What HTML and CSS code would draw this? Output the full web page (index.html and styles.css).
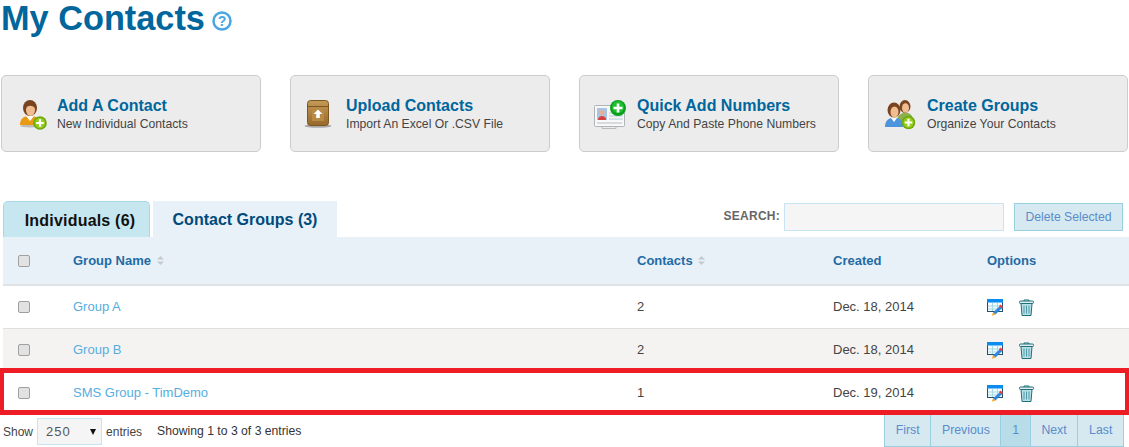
FILE: index.html
```html
<!DOCTYPE html>
<html>
<head>
  <meta charset="UTF-8">
  <title>My Contacts</title>
  <link rel="stylesheet" href="styles.css">
</head>
<body>
  <svg class="sprite" width="0" height="0">
    <defs>
      <linearGradient id="box-fill" x1="0" y1="0" x2="0" y2="1">
        <stop offset="0" stop-color="#c49a58"/>
        <stop offset="1" stop-color="#96682a"/>
      </linearGradient>
    </defs>
    <symbol id="plus-lime" viewBox="0 0 14 14">
      <circle cx="7" cy="7" r="6.8" fill="#6fa80a"/>
      <circle cx="7" cy="7" r="5.2" fill="#94cc1e"/>
      <path d="M7 3.2v7.6M3.2 7h7.6" stroke="#fff" stroke-width="2.2"/>
    </symbol>
    <symbol id="edit" viewBox="0 0 17 17">
      <rect x="0.5" y="0.5" width="15" height="12" fill="#f2fafd" stroke="#24506e"/>
      <rect x="0" y="0" width="16" height="3.5" fill="#0a8cf0"/>
      <path d="M1 7h14M1 10h14M5.5 4v8M10.5 4v8" stroke="#a8d8e4"/>
      <path d="M13.500 6.500l2 2-7 7-2.500-2z" fill="#2e86de"/>
      <path d="M13.500 5.500l2.500 2.500-1.500 1.500-2.500-2.500z" fill="#e8413c"/>
      <path d="M6 13l2.500 2.500-3.500 1.300z" fill="#f5a623"/>
    </symbol>
    <symbol id="trash" viewBox="0 0 15 17">
      <path d="M5 2V1h5v1" fill="none" stroke="#1f6e78"/>
      <rect x="0.500" y="2" width="14" height="2.500" rx="1" fill="#dff0f3" stroke="#1f6e78"/>
      <path d="M2 4.500h11l-1 12H3z" fill="#b8dfe6" stroke="#1f6e78"/>
      <path d="M5 6.500v8M7.500 6.500v8M10 6.500v8" stroke="#4f9aa6"/>
    </symbol>
    <symbol id="sort" viewBox="0 0 7 9">
      <path d="M3.500 0L7 3.500H0zM3.500 9L0 5.500h7z" fill="#c4cbd0"/>
    </symbol>
  </svg>

  <div class="title-row">
    <h1>My Contacts</h1>
    <svg class="help" width="20" height="20" viewBox="0 0 20 20">
      <circle cx="10" cy="10" r="8.500" fill="#fff" stroke="#4aa6e2" stroke-width="2.500"/>
      <text x="10" y="14.500" text-anchor="middle" class="help-mark">?</text>
    </svg>
  </div>

  <div class="tiles">
    <a class="tile">
      <svg class="tile-icon person" width="28" height="30" viewBox="0 0 28 30">
        <ellipse cx="11" cy="26" rx="10" ry="1.500" fill="#bbb"/>
        <path d="M1 25c0-6 3-8 7-9h6c4 1 7 3 7 9z" fill="#ea9a12"/>
        <path d="M7 16l4 5 4-5z" fill="#fff"/>
        <ellipse cx="11" cy="8" rx="7" ry="8" fill="#7a4320"/>
        <ellipse cx="11.500" cy="10" rx="4.500" ry="6" fill="#efbd90"/>
        <path d="M7 8c2-3 6-3 9 0l-1-4H8z" fill="#7a4320"/>
        <use href="#plus-lime" x="14" y="16" width="14" height="14"/>
      </svg>
      <span class="tile-text">
        <strong>Add A Contact</strong>
        <small>New Individual Contacts</small>
      </span>
    </a>
    <a class="tile">
      <svg class="tile-icon box" width="28" height="29" viewBox="0 0 28 29">
        <ellipse cx="14" cy="26" rx="13.500" ry="1.800" fill="#a8a8a8"/>
        <rect x="3.500" y="0.500" width="21" height="25" rx="3" fill="url(#box-fill)" stroke="#7d5620"/>
        <path d="M3.500 6.500h21" stroke="#7d5620"/>
        <rect x="8" y="8" width="12" height="13" fill="#b98a45"/>
        <path d="M14 9.500l4.500 4.500h-2.700v4h-3.600v-4H9.500z" fill="#fff"/>
      </svg>
      <span class="tile-text">
        <strong>Upload Contacts</strong>
        <small>Import An Excel Or .CSV File</small>
      </span>
    </a>
    <a class="tile">
      <svg class="tile-icon card" width="33" height="30" viewBox="0 0 33 30">
        <rect x="0.500" y="5.500" width="30" height="21" rx="1" fill="#f8f8f8" stroke="#aeb4b8"/>
        <rect x="3" y="8" width="10" height="12" fill="#a8c4e4"/>
        <circle cx="8" cy="12.500" r="2.500" fill="#e8b090"/>
        <path d="M4 20c0-3 2-4 4-4s4 1 4 4z" fill="#d8423c"/>
        <path d="M15 13h14M15 16h14M15 19h14" stroke="#b4c8d8"/>
        <path d="M3 23h25" stroke="#b8bcc0"/>
        <path d="M8 26.500v2h14v-2" fill="none" stroke="#b8bcc0"/>
        <circle cx="24" cy="8" r="8" fill="#0aa01c"/>
        <circle cx="24" cy="7" r="6" fill="#1fc030"/>
        <path d="M24 3.500v9M19.500 8h9" stroke="#fff" stroke-width="2.600"/>
      </svg>
      <span class="tile-text">
        <strong>Quick Add Numbers</strong>
        <small>Copy And Paste Phone Numbers</small>
      </span>
    </a>
    <a class="tile">
      <svg class="tile-icon group" width="32" height="30" viewBox="0 0 32 30">
        <path d="M13 21c0-5 3-7 6-8h5c3 1 5 3 5 8z" fill="#8cb04c"/>
        <ellipse cx="21" cy="6.500" rx="5.500" ry="6.500" fill="#7a4320"/>
        <ellipse cx="21.500" cy="8" rx="3.500" ry="4.800" fill="#efbd90"/>
        <path d="M1 27c0-6 3-8 6-9h6c4 1 6 3 6 9z" fill="#4c94dc"/>
        <path d="M7 18l3 4 3-4z" fill="#fff"/>
        <ellipse cx="10" cy="10" rx="6.500" ry="7.500" fill="#7a4320"/>
        <ellipse cx="10.500" cy="12" rx="4" ry="5.500" fill="#efbd90"/>
        <use href="#plus-lime" x="17.500" y="15.500" width="14" height="14"/>
      </svg>
      <span class="tile-text">
        <strong>Create Groups</strong>
        <small>Organize Your Contacts</small>
      </span>
    </a>
  </div>

  <div class="toolbar">
    <div class="tabs">
      <a class="tab">Individuals (6)</a>
      <a class="tab active">Contact Groups (3)</a>
    </div>
    <div class="search">
      <label for="search">SEARCH:</label>
      <input id="search" type="text">
      <button type="button" class="delete-btn">Delete Selected</button>
    </div>
  </div>

  <div class="table-wrap">
    <table class="contacts">
      <colgroup>
        <col class="col-check">
        <col class="col-name">
        <col class="col-count">
        <col class="col-date">
        <col>
      </colgroup>
      <thead>
        <tr>
          <th class="check"><input type="checkbox"></th>
          <th>Group Name <svg class="sort" width="7" height="9"><use href="#sort"/></svg></th>
          <th>Contacts <svg class="sort" width="7" height="9"><use href="#sort"/></svg></th>
          <th>Created</th>
          <th>Options</th>
        </tr>
      </thead>
      <tbody>
        <tr>
          <td class="check"><input type="checkbox"></td>
          <td><a class="group-link">Group A</a></td>
          <td>2</td>
          <td>Dec. 18, 2014</td>
          <td class="options">
            <svg width="17" height="17"><use href="#edit"/></svg>
            <svg width="15" height="17"><use href="#trash"/></svg>
          </td>
        </tr>
        <tr class="alt">
          <td class="check"><input type="checkbox"></td>
          <td><a class="group-link">Group B</a></td>
          <td>2</td>
          <td>Dec. 18, 2014</td>
          <td class="options">
            <svg width="17" height="17"><use href="#edit"/></svg>
            <svg width="15" height="17"><use href="#trash"/></svg>
          </td>
        </tr>
        <tr>
          <td class="check"><input type="checkbox"></td>
          <td><a class="group-link">SMS Group - TimDemo</a></td>
          <td>1</td>
          <td>Dec. 19, 2014</td>
          <td class="options">
            <svg width="17" height="17"><use href="#edit"/></svg>
            <svg width="15" height="17"><use href="#trash"/></svg>
          </td>
        </tr>
      </tbody>
    </table>
    <div class="highlight"></div>
  </div>

  <div class="table-foot">
    <div class="length">
      Show
      <span class="select-box">
        <select><option>250</option></select>
      </span>
      entries
    </div>
    <div class="info">Showing 1 to 3 of 3 entries</div>
    <div class="pager">
      <a>First</a>
      <a>Previous</a>
      <a class="current">1</a>
      <a>Next</a>
      <a>Last</a>
    </div>
  </div>
</body>
</html>
```

FILE: styles.css
```css
html, body {
  margin: 0;
  padding: 0;
}
body {
  font-family: "Liberation Sans", Arial, sans-serif;
  font-size: 12px;
  color: #444;
  background: #fff;
}
.sprite {
  position: absolute;
}

/* title */
.title-row {
  display: flex;
  align-items: flex-start;
  height: 75px;
  padding-left: 1px;
}
h1 {
  margin: 0;
  font-size: 34.3px;
  line-height: 37px;
  font-weight: bold;
  color: #00669c;
}
.help {
  margin: 11px 0 0 7px;
}
.help-mark {
  font-family: "Liberation Sans", Arial, sans-serif;
  font-size: 14px;
  font-weight: bold;
  fill: #4aa6e2;
}

/* action tiles */
.tiles {
  display: flex;
  gap: 29px;
  padding-left: 1px;
}
.tile {
  box-sizing: border-box;
  display: flex;
  align-items: center;
  width: 260px;
  height: 77px;
  background: #ececec;
  border: 1px solid #ccc;
  border-radius: 5px;
}
.tile-icon {
  flex: none;
}
.person { margin: 2px 10px 0 17px; }
.box { margin: 2px 14px 0 13px; }
.card { margin: 2px 10px 0 14px; }
.group { margin: 2px 11px 0 15px; }
.tile-text {
  display: flex;
  flex-direction: column;
}
.tile-text strong {
  font-size: 16px;
  line-height: 19px;
  color: #00669c;
}
.tile-text small {
  margin-top: 2px;
  font-size: 12.2px;
  line-height: 15px;
  color: #444;
}

/* tabs and search */
.toolbar {
  display: flex;
  justify-content: space-between;
  height: 36px;
  margin-top: 49px;
  padding-left: 3px;
}
.tabs {
  display: flex;
  gap: 3px;
}
.tab {
  box-sizing: border-box;
  height: 36px;
  width: 147px;
  padding: 10px 0 0 7px;
  text-align: center;
  font-size: 16px;
  line-height: 18px;
  letter-spacing: 0.2px;
  font-weight: bold;
  color: #111;
  background: #c6e7ef;
  border: 1px solid #a8d8e4;
  border-bottom: 0;
  border-radius: 5px 5px 0 0;
}
.tab.active {
  width: 184px;
  padding-left: 0;
  letter-spacing: 0;
  color: #004a7c;
  background: #e8f1f7;
  border: 0;
  border-radius: 0;
}
.search {
  display: flex;
  align-items: flex-start;
  padding: 2px 6px 0 0;
}
.search label {
  margin: 6px 4px 0 0;
  font-weight: bold;
  letter-spacing: 0.25px;
  color: #666;
}
.search input {
  box-sizing: border-box;
  width: 220px;
  height: 28px;
  margin: 0 10px 0 0;
  background: #f5f5f5;
  border: 1px solid #c8e4f4;
}
.delete-btn {
  box-sizing: border-box;
  width: 109px;
  height: 28px;
  padding: 0;
  font-family: inherit;
  font-size: 12.2px;
  color: #5a8ccc;
  background: #d6e9f0;
  border: 1px solid #98d0e0;
}

/* table */
.table-wrap {
  position: relative;
  margin-left: 3px;
}
.contacts {
  width: 100%;
  border-collapse: collapse;
  table-layout: fixed;
}
.col-check { width: 70px; }
.col-name { width: 564px; }
.col-count { width: 196px; }
.col-date { width: 154px; }
.contacts th {
  height: 47px;
  padding: 0;
  text-align: left;
  font-size: 13px;
  color: #1f6ba5;
  background: #e8f1f7;
  border-bottom: 2px solid #dfe3e6;
}
.contacts td {
  height: 40px;
  padding: 0 0 2px;
  font-size: 13px;
  color: #444;
  border-bottom: 1px solid #dfdfdf;
}
.contacts td.check,
.contacts td.options {
  height: 42px;
  padding-bottom: 0;
}
.contacts .alt td {
  background: #f5f3f1;
}
.contacts .check {
  padding-left: 15px;
}
.check input {
  appearance: none;
  display: block;
  width: 12px;
  height: 12px;
  margin: 0;
  background: #e2e2e2;
  border: 1px solid #a0a0a0;
  border-radius: 2px;
  box-sizing: border-box;
}
.group-link {
  color: #56aee0;
}
.sort {
  margin-left: 2px;
}
.options svg {
  vertical-align: middle;
}
.options svg + svg {
  margin-left: 11px;
}
.highlight {
  position: absolute;
  left: -3px;
  right: 0;
  top: 131px;
  height: 47px;
  box-sizing: border-box;
  border: solid #ee1c25;
  border-width: 5px 4px;
}

/* footer */
.table-foot {
  display: flex;
  align-items: flex-start;
  height: 32px;
  padding-left: 3px;
}
.length {
  display: flex;
  align-items: center;
  gap: 4px;
  height: 27px;
  margin-top: 3px;
}
.select-box {
  position: relative;
  display: block;
}
.select-box::after {
  content: "";
  position: absolute;
  right: 6px;
  top: 11px;
  border: 3.5px solid transparent;
  border-top: 6px solid #111;
  border-bottom: 0;
}
.select-box select {
  appearance: none;
  display: block;
  box-sizing: border-box;
  width: 65px;
  height: 27px;
  padding: 0 0 0 8px;
  font-family: inherit;
  font-size: 13px;
  letter-spacing: 1px;
  color: #555;
  background: #f5f5f5;
  border: 1px solid #c8e4f4;
  border-radius: 0;
}
.info {
  margin: 9px 0 0 15px;
  font-size: 12.2px;
  color: #333;
}
.pager {
  display: flex;
  height: 32px;
  margin-left: auto;
  margin-right: 5px;
  box-sizing: border-box;
  background: #d6e9f0;
  border: 1px solid #98d0e0;
  border-top: 0;
}
.pager a {
  display: block;
  line-height: 31px;
  padding: 0 10.7px;
  font-size: 12.3px;
  color: #5a8ccc;
  border-left: 1px solid #98d0e0;
}
.pager a:first-child {
  border-left: 0;
}
.pager .current {
  background: #b8dde8;
}
```
